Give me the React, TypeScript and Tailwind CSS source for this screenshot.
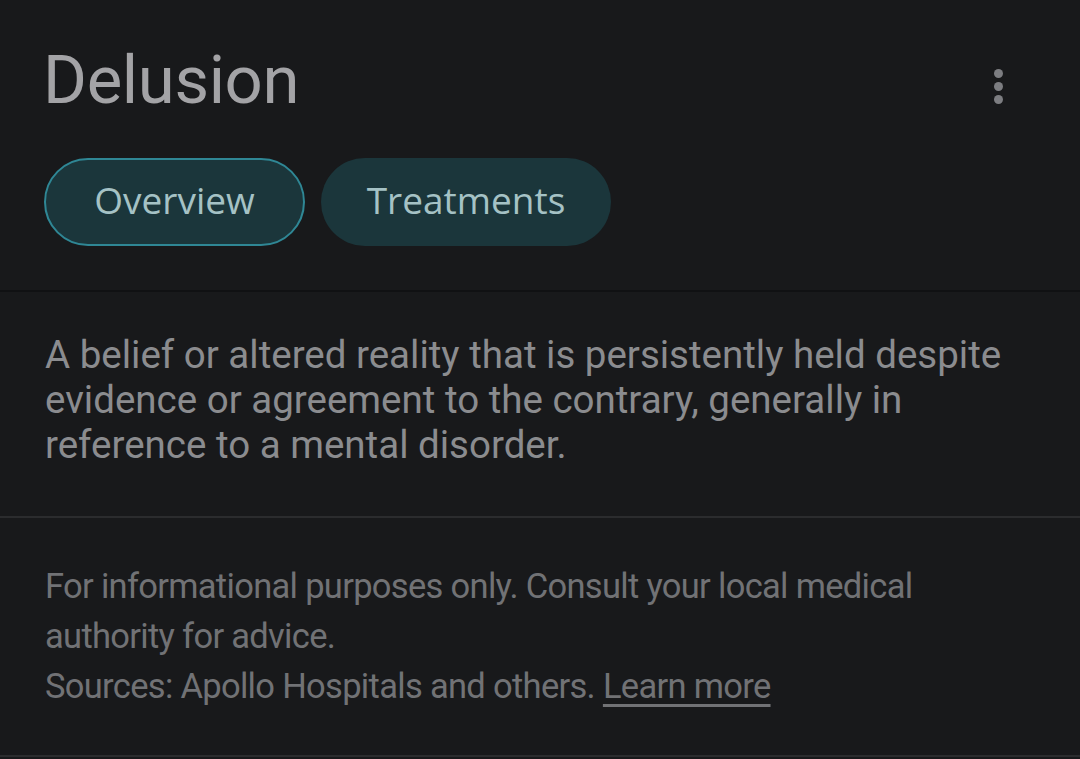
import React from 'react';

export default function App() {
  return (
    <div className="w-[1080px] h-[759px] overflow-hidden bg-[#18191b]" style={{ fontFamily: 'Roboto, "Noto Sans", sans-serif' }}>
      {/* Header */}
      <div className="h-[290px] px-[45px] pt-[40px] flex flex-col">
        <div className="flex items-start justify-between">
          <h1 className="text-[67px] leading-[80px] text-[#a3a3a6] tracking-[-0.005em] -ml-[2px]">Delusion</h1>
          <button className="mt-[29px] mr-[32px] flex flex-col items-center gap-[4px]" aria-label="More options">
            <span className="block w-[9px] h-[9px] rounded-full bg-[#7c7d81]" />
            <span className="block w-[9px] h-[9px] rounded-full bg-[#7c7d81]" />
            <span className="block w-[9px] h-[9px] rounded-full bg-[#7c7d81]" />
          </button>
        </div>
        <div className="mt-[38px] -ml-px flex gap-[16px]">
          <button className="h-[88px] w-[261px] pb-[5px] rounded-full border-2 border-[#2f8795] bg-[#1b363b] text-[37px] leading-none text-[#a5c2c5]" style={{ fontFamily: '"Open Sans", Roboto, sans-serif' }}>Overview</button>
          <button className="h-[88px] w-[290px] pb-[5px] rounded-full bg-[#1b363b] text-[37px] leading-none text-[#a5c2c5]" style={{ fontFamily: '"Open Sans", Roboto, sans-serif' }}>Treatments</button>
        </div>
      </div>
      <div className="h-[2px] bg-[#101113]" />

      {/* Description */}
      <div className="h-[224px] px-[45px] pt-[40px]">
        <p className="text-[38.5px] leading-[45px] text-[#8b8c8f] tracking-normal">
          A belief or altered reality that is persistently held despite evidence or agreement to the contrary, generally in reference to a mental disorder.
        </p>
      </div>
      <div className="h-[2px] bg-[#2b2c2e]" />

      {/* Disclaimer */}
      <div className="h-[237px] px-[45px] pt-[43px]">
        <p className="text-[34.5px] leading-[50px] text-[#717275] tracking-[-0.02em]">
          For informational purposes only. Consult your local medical authority for advice.
        </p>
        <p className="text-[34.5px] leading-[50px] text-[#717275] tracking-[-0.02em]">
          Sources: Apollo Hospitals and others.{' '}
          <a href="#" className="underline decoration-[3px] underline-offset-[6px]">Learn more</a>
        </p>
      </div>
      <div className="h-[2px] bg-[#2b2c2e]" />
    </div>
  );
}
